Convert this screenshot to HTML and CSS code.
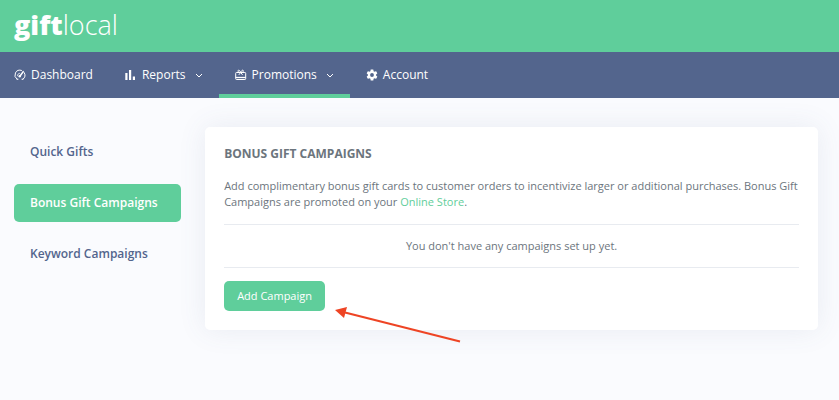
FILE: index.html
```html
<!DOCTYPE html>
<html lang="en">

<head>
    <meta charset="utf-8">
    <meta name="viewport" content="width=device-width, initial-scale=1.0">
    <title>Bonus Gift Campaigns - giftlocal</title>
    <link rel="stylesheet" href="styles.css">
</head>

<body>
    <header class="topbar">
        <a href="#" class="logo"><strong>gift</strong><span>local</span></a>
    </header>

    <nav class="menu">
        <a href="#" class="menu-item">
            <svg class="icon" viewBox="0 0 12 12" fill="none" stroke="currentColor" stroke-linecap="round">
                <path d="M3 10.200A5 5 0 0 1 7.500 1.400M10.200 3.600A5 5 0 0 1 9 10.200M3 10.200h1M8 10.200h1" />
                <path d="M5.900 7.300L9.200 2.600" stroke-width="1.500" />
                <circle cx="5.700" cy="7.300" r="1.200" fill="currentColor" stroke="none" />
                <path d="M3.300 6.800A2.700 2.700 0 0 1 5.600 4.200" stroke-width="0.700" />
            </svg>
            Dashboard
        </a>
        <a href="#" class="menu-item">
            <svg class="icon" viewBox="0 0 12 12" fill="currentColor">
                <path d="M0.300 4h2.200v7H0.300zM4 1h2.200v10H4zM7.800 7.500H10V11H7.800z" />
            </svg>
            Reports
            <svg class="chevron" viewBox="0 0 8 8" fill="none" stroke="currentColor">
                <path d="M1 3l3 3 3-3" />
            </svg>
        </a>
        <a href="#" class="menu-item active">
            <svg class="icon" viewBox="0 0 12 12" fill="none" stroke="currentColor">
                <rect x="0.700" y="3.500" width="10" height="7" rx="0.800" />
                <path d="M0.700 8.500h10" stroke-width="1.300" />
                <path d="M5.700 3.500C4.600 0.400 2.700 0.700 3.100 2.400 3.300 3.200 4.500 3.500 5.700 3.500C6.800 0.400 8.700 0.700 8.300 2.400 8.100 3.200 6.900 3.500 5.700 3.500L3.800 5.900M5.700 3.500L7.600 5.900" />
            </svg>
            Promotions
            <svg class="chevron" viewBox="0 0 8 8" fill="none" stroke="currentColor">
                <path d="M1 3l3 3 3-3" />
            </svg>
        </a>
        <a href="#" class="menu-item">
            <svg class="icon" viewBox="1 2 22 20" fill="currentColor">
                <path d="M12 15.500A3.500 3.500 0 0 1 8.500 12 3.500 3.500 0 0 1 12 8.500a3.500 3.500 0 0 1 3.500 3.500 3.500 3.500 0 0 1-3.500 3.500m7.430-2.530c.04-.32.07-.64.07-.97s-.03-.66-.07-1l2.110-1.630c.19-.15.240-.42.120-.64l-2-3.460c-.12-.22-.39-.31-.61-.22l-2.490 1c-.52-.39-1.060-.73-1.690-.98l-.37-2.650A.506.506 0 0 0 14 2h-4c-.25 0-.46.180-.5.420l-.37 2.650c-.63.250-1.170.590-1.690.980l-2.490-1c-.22-.09-.49 0-.61.220l-2 3.460c-.13.220-.07.490.120.640L4.570 11c-.04.340-.07.670-.07 1s.03.650.07.970l-2.110 1.660c-.19.150-.25.420-.12.640l2 3.460c.12.220.39.300.61.220l2.490-1.010c.52.400 1.060.740 1.690.990l.37 2.650c.04.240.25.420.5.420h4c.25 0 .46-.18.5-.42l.37-2.650c.63-.26 1.170-.59 1.690-.99l2.490 1.010c.22.080.49 0 .61-.22l2-3.460c.12-.22.07-.49-.12-.64z" />
            </svg>
            Account
        </a>
    </nav>

    <div class="page">
        <aside class="sidebar">
            <a href="#" class="side-link">Quick Gifts</a>
            <a href="#" class="side-link selected">Bonus Gift Campaigns</a>
            <a href="#" class="side-link">Keyword Campaigns</a>
        </aside>

        <main class="card">
            <h1>Bonus Gift Campaigns</h1>
            <p class="intro">Add complimentary bonus gift cards to customer orders to incentivize larger or additional purchases. Bonus Gift Campaigns are promoted on your <a href="#">Online Store</a>.</p>
            <p class="empty">You don't have any campaigns set up yet.</p>
            <div class="actions">
                <button type="button" class="btn">Add Campaign</button>
                <svg class="arrow" viewBox="0 0 128 38">
                    <path d="M10 5.500L125 34.500" stroke="#ee4424" stroke-width="2.200" />
                    <path d="M0 3L12 0 9 11z" fill="#ee4424" />
                </svg>
            </div>
        </main>
    </div>
</body>

</html>
```

FILE: styles.css
```css
* {
    box-sizing: border-box;
}

body {
    margin: 0;
    background-color: #fafbfe;
    color: #6c757d;
    font-family: "Open Sans", "Liberation Sans", sans-serif;
    font-size: 11px;
    line-height: 16px;
}

a {
    color: #5fce9b;
    text-decoration: none;
}

.topbar {
    display: flex;
    align-items: center;
    height: 52px;
    padding: 0 14px 2px;
    background-color: #5fce9b;
}

.logo {
    color: white;
    font-size: 27px;
    font-weight: 300;
    line-height: 32px;
}

.logo strong {
    font-weight: 800;
}

.menu {
    display: flex;
    height: 46px;
    background-color: #53658d;
}

.menu-item {
    display: flex;
    align-items: center;
    gap: 5px;
    padding: 4px 16px 0;
    border-bottom: 4px solid transparent;
    color: white;
    font-size: 12px;
}

.menu-item:first-child {
    padding-left: 14px;
}

.menu-item.active {
    border-bottom-color: #5fce9b;
}

.icon {
    width: 12px;
    height: 12px;
}

.chevron {
    width: 8px;
    height: 8px;
    margin-left: 4px;
}

.page {
    display: grid;
    grid-template-columns: 3fr 11fr;
    align-items: start;
    gap: 24px;
    padding: 29px 21px 29px 14px;
}

.sidebar {
    display: flex;
    flex-direction: column;
    gap: 13px;
    padding-top: 6px;
}

.side-link {
    padding: 11px 16px;
    border-radius: 5px;
    color: #53658d;
    font-size: 12px;
    font-weight: 600;
}

.side-link.selected {
    background-color: #5fce9b;
    color: white;
}

.card {
    padding: 19px;
    border-radius: 5px;
    background-color: white;
    box-shadow: 0 0 28px rgba(83, 101, 141, 0.1);
}

h1 {
    margin: 0 0 16px;
    font-size: 12px;
    font-weight: bold;
    line-height: 16px;
    text-transform: uppercase;
}

.intro {
    margin: 0 0 14px;
}

.empty {
    margin: 0 0 13px;
    padding: 13px 0;
    border-top: 1px solid #e8ebf0;
    border-bottom: 1px solid #e8ebf0;
    text-align: center;
}

.actions {
    display: flex;
    position: relative;
    width: fit-content;
}

.btn {
    padding: 7px 13px;
    border: none;
    border-radius: 5px;
    background-color: #5fce9b;
    color: white;
    font-family: inherit;
    font-size: 11px;
    line-height: 16px;
}

/* points at the button, over the card's edge */
.arrow {
    position: absolute;
    top: 26px;
    left: calc(100% + 10px);
    width: 128px;
    height: 38px;
}
```
